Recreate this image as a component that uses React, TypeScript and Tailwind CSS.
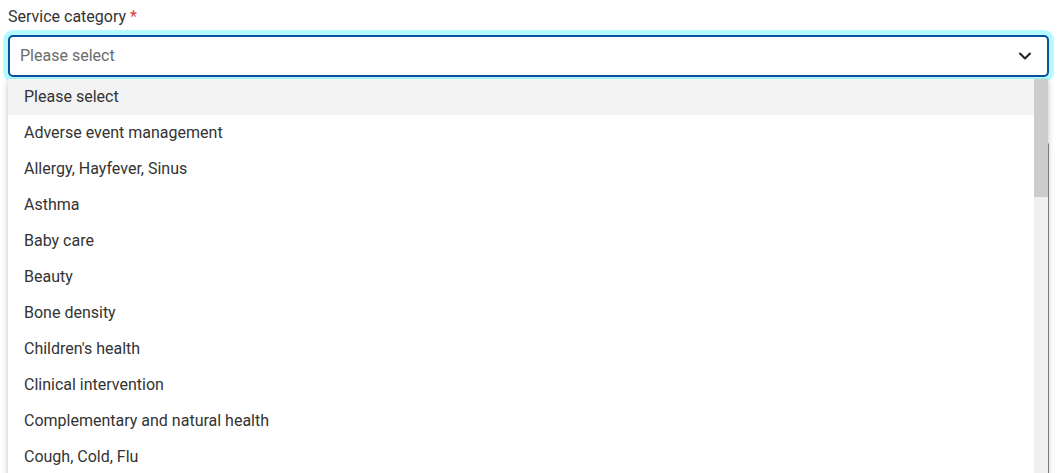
import { ChevronDown } from "lucide-react";

const categories = [
  "Please select",
  "Adverse event management",
  "Allergy, Hayfever, Sinus",
  "Asthma",
  "Baby care",
  "Beauty",
  "Bone density",
  "Children's health",
  "Clinical intervention",
  "Complementary and natural health",
  "Cough, Cold, Flu",
];

export default function App() {
  return (
    <div
      className="h-[473px] overflow-hidden bg-white pl-2 pr-3 pt-[5px] text-[#333]"
      style={{ fontFamily: "Roboto, 'Liberation Sans', sans-serif" }}
    >
      <label className="block text-base leading-6">
        Service category <span className="text-[#e53935]">*</span>
      </label>

      <div className="relative mt-[6px]">
        <div className="flex h-[42px] items-center justify-between rounded-[5px] border-2 border-[#0a4fa0] bg-white pl-[10px] pr-3 shadow-[0_0_0_5px_#b3fbff]">
          <span className="text-base text-[#6b6b6b]">Please select</span>
          <ChevronDown className="h-5 w-5 text-[#222]" strokeWidth={2.5} />
        </div>

        {/* field below, mostly hidden by the open list */}
        <div className="mt-[64px] h-[400px] rounded-[4px] border border-[#8a8a8a]" />

        <div className="absolute left-0 right-[1px] top-[44px] z-10 flex h-[420px] bg-white shadow-[0_2px_6px_rgba(0,0,0,0.25)]">
          <ul className="flex-1">
            {categories.map((c, i) => (
              <li
                key={c}
                className={`flex h-9 items-center pl-4 text-base ${i === 0 ? "bg-[#f3f3f3]" : ""}`}
              >
                {c}
              </li>
            ))}
          </ul>
          <div className="w-[14px] bg-[#f0f0f0]">
            <div className="h-[118px] bg-[#cdcdcd]" />
          </div>
        </div>
      </div>
    </div>
  );
}
